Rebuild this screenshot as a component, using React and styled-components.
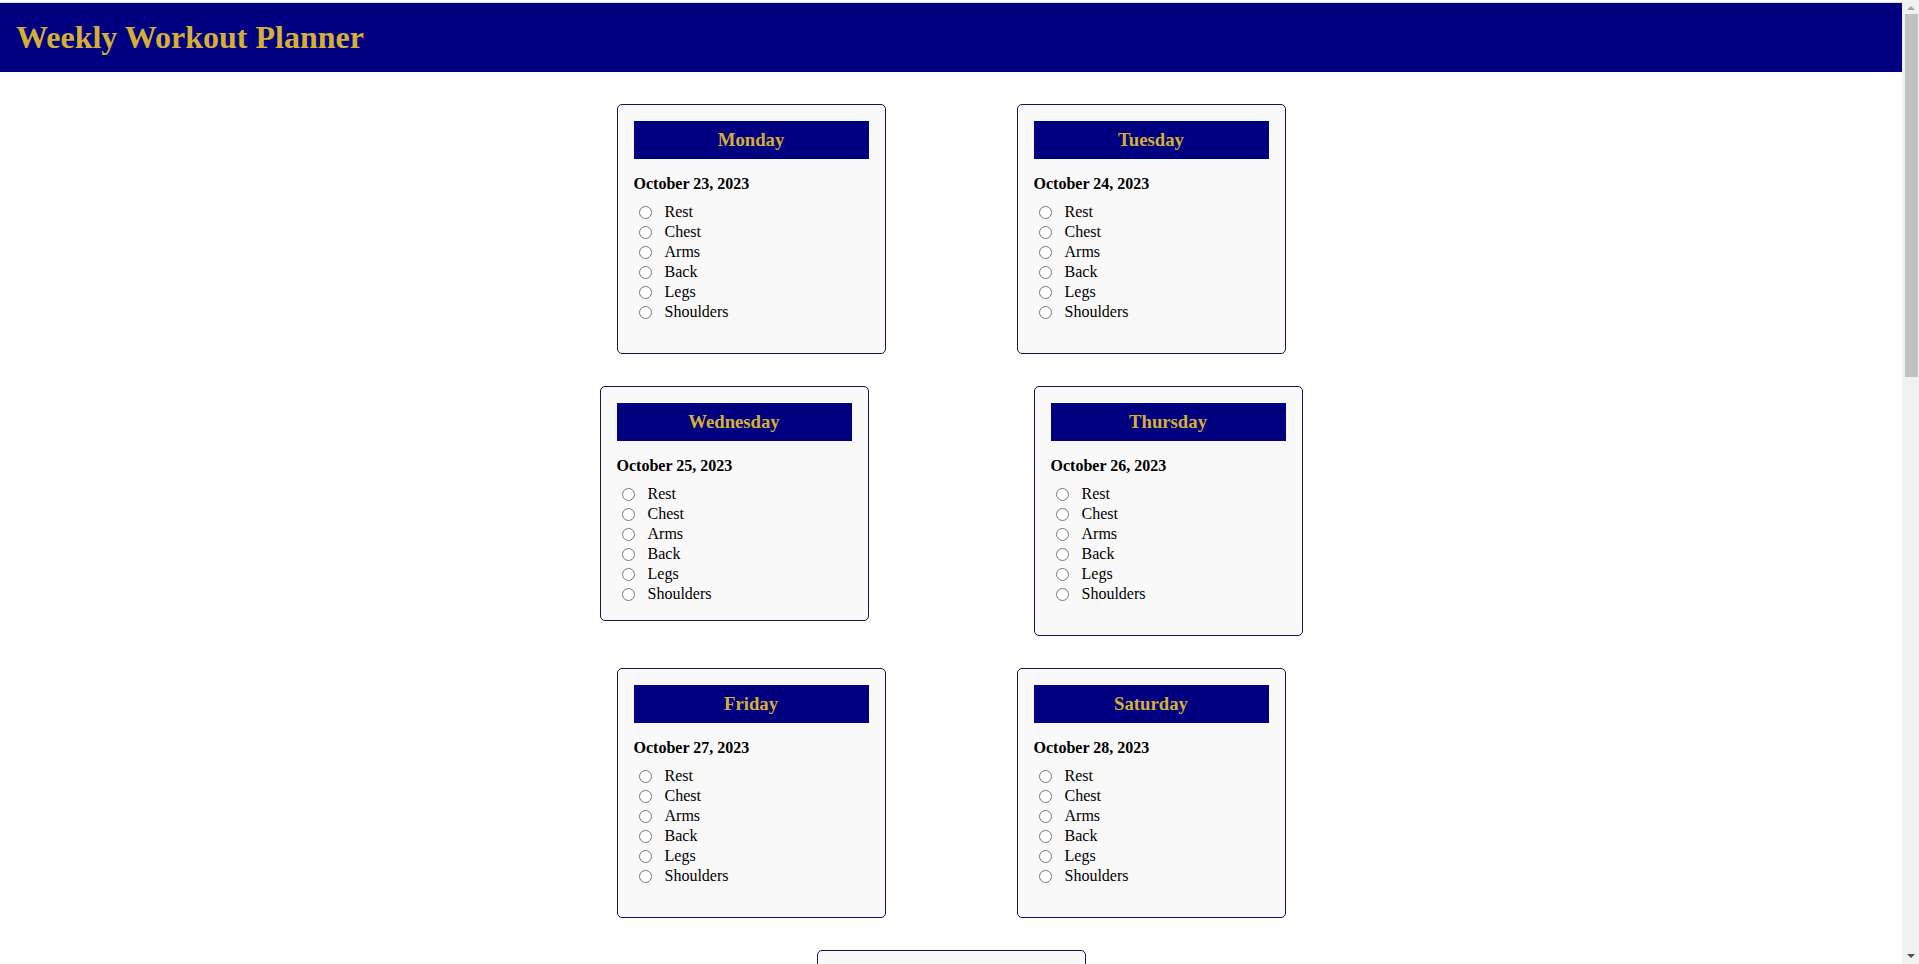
import styled, {createGlobalStyle} from "styled-components";

const GlobalStyle = createGlobalStyle`
  body {
    margin: 0;
    padding: 2px 17px 0 0;
    background: #fff;
    font-family: "Liberation Serif", "Times New Roman", serif;
    color: #000;
  }
`

const Page = styled.div`
  min-height: 2466px;
`
const TopBar = styled.header`
  background: #000080;
  border-top: 1px solid #dcdcdc;
  padding: 16px;
`
const Title = styled.h1`
  margin: 0;
  font-size: 32px;
  font-weight: bold;
  color: #d4af37;
`
const Board = styled.main`
  display: flex;
  flex-direction: column;
  gap: 32px;
  padding: 32px 0;
`
const Row = styled.div`
  display: flex;
  justify-content: center;
  align-items: flex-start;
  gap: ${props => props.$gap}px;
`
const DayCard = styled.section`
  box-sizing: border-box;
  width: 269px;
  padding: 16px;
  background: #f9f9f9;
  border: 1px solid #1c0f4f;
  border-radius: 5px;
`
const DayTitle = styled.h3`
  margin: 0;
  padding: 8px;
  background: #000080;
  color: #d4af37;
  font-size: 18.72px;
  font-weight: bold;
  text-align: center;
`
const DateLabel = styled.div`
  margin: 16px 0 9px;
  font-size: 16px;
  font-weight: bold;
`
const Options = styled.div`
  margin-bottom: ${props => props.$compact ? 0 : 15}px;
`
const Option = styled.label`
  display: flex;
  align-items: center;
  height: 20px;
  font-size: 16px;
`
const Radio = styled.input`
  width: 13px;
  height: 13px;
  margin: 0 13px 0 5px;
`

// window scrollbar as it shows in the reference
const ScrollRail = styled.div`
  position: fixed;
  top: 0;
  right: 0;
  box-sizing: border-box;
  width: 17px;
  height: 100vh;
  padding-top: 3px;
  background: #f1f1f1;
  display: flex;
  flex-direction: column;
  align-items: center;
`
const ScrollArrow = styled.div`
  width: 0;
  height: 0;
  margin: 3px 0 4px;
  border-left: 4px solid transparent;
  border-right: 4px solid transparent;
  border-bottom: 4px solid #a3a3a3;
`
const ScrollThumb = styled.div`
  width: 13px;
  height: 363px;
  margin-left: 1px;
  background: #c1c1c1;
`
const ScrollArrowDown = styled.div`
  width: 0;
  height: 0;
  margin: auto 0 6px;
  border-left: 4px solid transparent;
  border-right: 4px solid transparent;
  border-top: 4px solid #505050;
`

const workouts = ["Rest", "Chest", "Arms", "Back", "Legs", "Shoulders"]

const rows = [
    {gap: 131, days: [
        {name: "Monday", date: "October 23, 2023"},
        {name: "Tuesday", date: "October 24, 2023"},
    ]},
    {gap: 165, days: [
        {name: "Wednesday", date: "October 25, 2023", compact: true},
        {name: "Thursday", date: "October 26, 2023"},
    ]},
    {gap: 131, days: [
        {name: "Friday", date: "October 27, 2023"},
        {name: "Saturday", date: "October 28, 2023"},
    ]},
    {gap: 0, days: [
        {name: "Sunday", date: "October 29, 2023"},
    ]},
]

const Day = ({name, date, compact}) => {
    return (
        <DayCard>
            <DayTitle>{name}</DayTitle>
            <DateLabel>{date}</DateLabel>
            <Options $compact={compact}>
                {workouts.map(w =>
                    <Option key={w}>
                        <Radio type="radio" name={name} value={w}/>
                        {w}
                    </Option>
                )}
            </Options>
        </DayCard>
    )
}

const App = () => {
    return (
        <Page>
            <GlobalStyle/>
            <TopBar>
                <Title>Weekly Workout Planner</Title>
            </TopBar>
            <Board>
                {rows.map((row, i) =>
                    <Row key={i} $gap={row.gap}>
                        {row.days.map(d => <Day key={d.name} {...d}/>)}
                    </Row>
                )}
            </Board>
            <ScrollRail>
                <ScrollArrow/>
                <ScrollThumb/>
                <ScrollArrowDown/>
            </ScrollRail>
        </Page>
    )
}

export default App
